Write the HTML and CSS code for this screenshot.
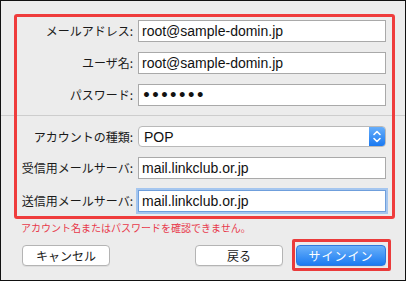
FILE: index.html
```html
<!DOCTYPE html>
<html lang="ja">
<head>
    <meta charset="UTF-8">
    <meta name="viewport" content="width=device-width, initial-scale=1.0">
    <title>アカウント設定</title>
    <link rel="stylesheet" href="styles.css">
</head>
<body>
    <div class="window">
        <form class="account-form">
            <div class="fields">
                <label for="email">メールアドレス:</label>
                <input id="email" type="text" value="root@sample-domin.jp">
                <label for="user">ユーザ名:</label>
                <input id="user" type="text" value="root@sample-domin.jp">
                <label for="pass">パスワード:</label>
                <input id="pass" class="password" type="password" value="1234567">
            </div>
            <hr class="divider">
            <div class="fields">
                <label for="accountType">アカウントの種類:</label>
                <div class="select-box">
                    <select id="accountType">
                        <option value="pop">POP</option>
                        <option value="imap">IMAP</option>
                    </select>
                    <span class="stepper">
                        <svg width="16" height="19" viewBox="0 0 16 19">
                            <path d="M5 7.5 L8 4.5 L11 7.5" fill="none" stroke="#fff" stroke-width="1.6" stroke-linecap="round" stroke-linejoin="round"/>
                            <path d="M5 11.5 L8 14.5 L11 11.5" fill="none" stroke="#fff" stroke-width="1.6" stroke-linecap="round" stroke-linejoin="round"/>
                        </svg>
                    </span>
                </div>
                <label for="incoming">受信用メールサーバ:</label>
                <input id="incoming" type="text" value="mail.linkclub.or.jp">
                <label for="outgoing">送信用メールサーバ:</label>
                <input id="outgoing" class="focused" type="text" value="mail.linkclub.or.jp">
            </div>
            <p class="error">アカウント名またはパスワードを確認できません。</p>
            <div class="actions">
                <button type="button" class="btn">キャンセル</button>
                <button type="button" class="btn back">戻る</button>
                <span class="mark">
                    <button type="submit" class="btn primary">サインイン</button>
                </span>
            </div>
        </form>
        <div class="highlight"></div>
    </div>
</body>
</html>
```

FILE: styles.css
```css
body {
    margin: 0;
    background-color: #ececec;
}
.window {
    position: relative;
    width: 406px;
    height: 281px;
    box-sizing: border-box;
    border: 1px solid #111;
    background-color: #ececec;
    font-family: "Noto Sans CJK JP", sans-serif;
    color: #1a1a1a;
}
.account-form {
    padding-top: 19px;
}
.fields {
    display: grid;
    grid-template-columns: 118px 248px;
    column-gap: 5px;
    row-gap: 10px;
    align-items: center;
    padding-left: 14px;
}
.fields label {
    text-align: right;
    font-size: 12px;
    line-height: 16px;
    white-space: nowrap;
}
.fields input {
    height: 22px;
    box-sizing: border-box;
    margin: 0;
    padding: 0 3px;
    border: 1px solid #a9a9a9;
    border-radius: 0;
    background-color: #fff;
    font-family: "Liberation Sans", Arial, sans-serif;
    font-size: 14px;
    color: #111;
    outline: none;
}
.fields input.password {
    font-family: "DejaVu Sans", sans-serif;
    font-size: 14px;
    font-weight: bold;
    letter-spacing: 0;
}
.fields input.focused {
    margin-top: 1px;
    border-color: #6f9fdc;
    box-shadow: 0 0 0 2px #a5c6ef;
}
.divider {
    margin: 9px 0 10px;
    border: 0;
    border-top: 1px solid #cdcdcd;
}
.select-box {
    display: flex;
    height: 21px;
    box-sizing: border-box;
    border: 1px solid #b9b9b9;
    border-radius: 4px;
    background-color: #fff;
    overflow: hidden;
}
.select-box select {
    flex: 1;
    appearance: none;
    -webkit-appearance: none;
    border: none;
    background: transparent;
    padding: 0 0 0 5px;
    font-family: "Liberation Sans", Arial, sans-serif;
    font-size: 14px;
    color: #111;
    outline: none;
}
.stepper {
    display: flex;
    width: 16px;
    background: linear-gradient(#67aefa, #1a79f1);
}
.error {
    margin: 9px 0 0;
    padding-left: 20px;
    font-size: 10px;
    line-height: 14px;
    color: #e8394b;
}
.actions {
    display: flex;
    align-items: flex-start;
    gap: 13px;
    margin-top: 10px;
    padding: 0 19px 0 21px;
}
.btn {
    height: 21px;
    width: 88px;
    padding: 0;
    border: 1px solid #b4b4b4;
    border-radius: 4px;
    background-color: #fff;
    box-shadow: 0 1px 0 rgba(0,0,0,0.06);
    font-family: "Noto Sans CJK JP", sans-serif;
    font-size: 12px;
    color: #1a1a1a;
    cursor: pointer;
}
.btn.back {
    margin-left: auto;
}
.mark {
    display: flex;
    margin: -6px -5px -5px -4px;
    padding: 3px 2px 2px 1px;
    border: 3px solid #ea3b3b;
    border-radius: 2px;
}
.btn.primary {
    width: 90px;
    border-color: #2f78dc;
    background: linear-gradient(#6ab1fa, #1b7bf1);
    color: #fff;
    letter-spacing: 1px;
}
.highlight {
    position: absolute;
    left: 13px;
    top: 13px;
    width: 381px;
    height: 205px;
    box-sizing: border-box;
    border: 3px solid #ef3c3c;
    border-radius: 3px;
    pointer-events: none;
}
```
